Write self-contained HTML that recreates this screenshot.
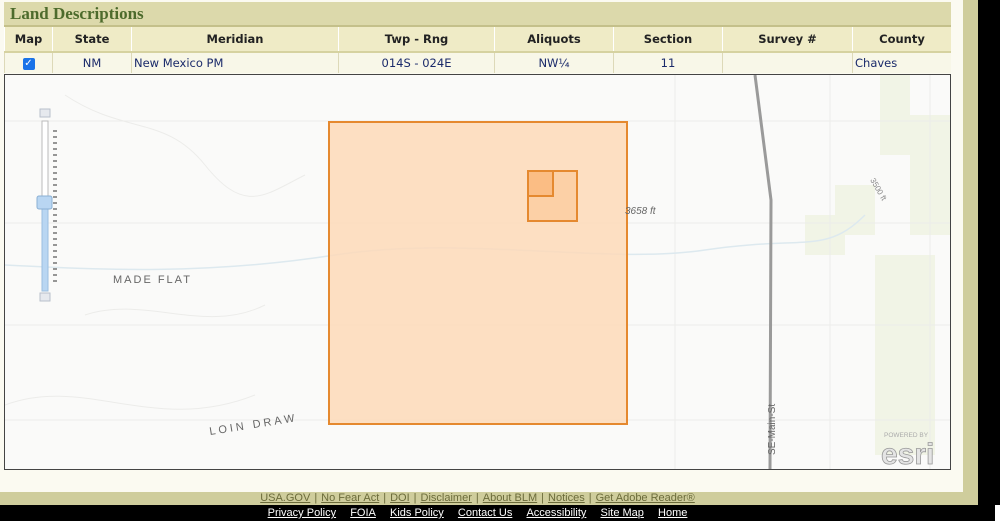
<!DOCTYPE html>
<html><head><style>
body{margin:0;width:1000px;height:529px;background:#fff;position:relative;overflow:hidden;font-family:"DejaVu Sans","Liberation Sans",sans-serif;}
.abs{position:absolute}
table{border-collapse:collapse;position:absolute;left:4px;top:27px;width:947px;font-size:11.5px}
th{background:#efebc6;height:24px;font-weight:bold;color:#222;border-left:1px solid #fff;border-bottom:2px solid #d6d2a0;padding:0}
td{background:#f8f7e8;height:20px;color:#1a2a6a;border-left:1px solid #ddd9b8;padding:0;text-align:center}
.f1 a,.f2 a{text-decoration:underline;margin:0 4px}
</style></head><body>
<div class="abs" style="left:0;top:0;width:995px;height:505px;background:#cfcd9c"></div>
<div class="abs" style="left:978px;top:0;width:22px;height:505px;background:#000"></div>
<div class="abs" style="left:0;top:0;width:963px;height:492px;background:#fbfaf1"></div>
<div class="abs" style="left:4px;top:2px;width:947px;height:23px;background:#dcd9ab;border-bottom:2px solid #c4c08a"></div>
<div class="abs" style="left:10px;top:4px;font-family:'Liberation Serif',serif;font-weight:bold;font-size:17px;color:#4d6b2c">Land Descriptions</div>
<table>
<tr><th style="width:47px">Map</th><th style="width:78px">State</th><th style="width:206px">Meridian</th><th style="width:155px">Twp - Rng</th><th style="width:118px">Aliquots</th><th style="width:108px">Section</th><th style="width:129px">Survey #</th><th>County</th></tr>
<tr><td><span style="display:inline-block;width:12px;height:12px;background:#1a73e8;border-radius:2px;color:#fff;font-size:10px;line-height:12px;vertical-align:middle">✓</span></td><td>NM</td><td style="text-align:left;padding-left:2px">New Mexico PM</td><td>014S - 024E</td><td>NW¼</td><td>11</td><td></td><td style="text-align:left;padding-left:2px">Chaves</td></tr>
</table>
<div class="abs" style="left:4px;top:74px;width:945px;height:394px;border:1px solid #444;background:#fafaf9;overflow:hidden">
<svg width="945" height="394" style="position:absolute;left:0;top:0">
<g fill="#f1f4e6"><rect x="875" y="0" width="30" height="80"/><rect x="905" y="40" width="40" height="120"/><rect x="870" y="180" width="60" height="200"/><rect x="830" y="110" width="40" height="50"/><rect x="800" y="140" width="40" height="40"/></g>
<g stroke="#ececea" stroke-width="1" fill="none">
<line x1="0" y1="46" x2="945" y2="46"/><line x1="0" y1="148" x2="945" y2="148"/><line x1="0" y1="250" x2="945" y2="250"/><line x1="0" y1="345" x2="945" y2="345"/>
<line x1="670" y1="0" x2="670" y2="394"/><line x1="825" y1="0" x2="825" y2="394"/><line x1="925" y1="0" x2="925" y2="394"/>
<path d="M60 20 C120 60 160 40 200 90 S260 120 300 100"/><path d="M80 240 C140 220 200 260 260 230"/><path d="M0 330 C80 300 150 360 250 320"/>
</g>
<path d="M0 190 C100 195 200 200 330 180 S600 190 700 175 S820 180 860 140" stroke="#dde9ef" fill="none" stroke-width="1.5"/>
<path d="M750 0 L766 125 L765 394" stroke="#9a9a9a" stroke-width="3" fill="none"/>
<rect x="324" y="47" width="298" height="302" fill="#fdd9b8" fill-opacity="0.85" stroke="#e5892f" stroke-width="2"/>
<rect x="523" y="96" width="49" height="50" fill="#fcd0a6" stroke="#e5892f" stroke-width="2"/>
<rect x="523" y="96" width="25" height="25" fill="#fbbd84" stroke="#e5892f" stroke-width="2"/>
<text x="620" y="139" font-size="10" font-style="italic" fill="#666" font-family="Liberation Sans">3658 ft</text>
<text x="108" y="208" font-size="11" fill="#666" letter-spacing="2" font-family="Liberation Sans">MADE FLAT</text>
<text x="205" y="360" font-size="11" fill="#666" letter-spacing="3" font-family="Liberation Sans" transform="rotate(-9 205 360)">LOIN DRAW</text>
<text x="770" y="380" font-size="10" fill="#666" font-family="Liberation Sans" transform="rotate(-90 770 380)">SE-Main-St</text>
<text x="865" y="105" font-size="8" fill="#888" font-family="Liberation Sans" transform="rotate(60 865 105)">3500 ft</text>
<rect x="35" y="34" width="10" height="8" fill="#e6e9ee" stroke="#b8c0cc"/><rect x="35" y="218" width="10" height="8" fill="#e6e9ee" stroke="#b8c0cc"/>
<rect x="37" y="46" width="6" height="170" fill="#fff" stroke="#bbb"/><rect x="37" y="126" width="6" height="90" fill="#b9d6f2" stroke="#9cbfe0"/>
<rect x="32" y="121" width="15" height="13" rx="2" fill="#b9d6f2" stroke="#8ab0d4"/>
<g stroke="#333" stroke-width="1">
<path d="M48 56h4M48 62h4M48 68h4M48 74h4M48 80h4M48 86h4M48 92h4M48 98h4M48 104h4M48 110h4M48 116h4M48 122h4M48 128h4M48 134h4M48 140h4M48 146h4M48 152h4M48 158h4M48 164h4M48 170h4M48 176h4M48 182h4M48 188h4M48 194h4M48 200h4M48 206h4"/></g>
<text x="879" y="362" font-size="6.5" fill="#aaa" font-family="Liberation Sans">POWERED BY</text>
<text x="876" y="389" font-size="30" font-weight="bold" fill="#e4e4e4" stroke="#999" stroke-width="0.8" font-family="Liberation Sans">esri</text>
</svg></div>
<div class="abs f1" style="left:0;top:492px;width:995px;height:13px;text-align:center;font-family:'Liberation Sans',sans-serif;font-size:11px;color:#6b6b3a;line-height:13px;padding-right:40px;box-sizing:border-box"><a>USA.GOV</a>|<a>No Fear Act</a>|<a>DOI</a>|<a>Disclaimer</a>|<a>About BLM</a>|<a>Notices</a>|<a>Get Adobe Reader®</a></div>
<div class="abs f2" style="left:0;top:505px;width:995px;height:16px;background:#000;text-align:center;font-family:'Liberation Sans',sans-serif;font-size:11px;color:#fff;line-height:16px;padding-right:40px;box-sizing:border-box"><a>Privacy Policy</a>&nbsp;&nbsp;<a>FOIA</a>&nbsp;&nbsp;<a>Kids Policy</a>&nbsp;&nbsp;<a>Contact Us</a>&nbsp;&nbsp;<a>Accessibility</a>&nbsp;&nbsp;<a>Site Map</a>&nbsp;&nbsp;<a>Home</a></div>
</body></html>
